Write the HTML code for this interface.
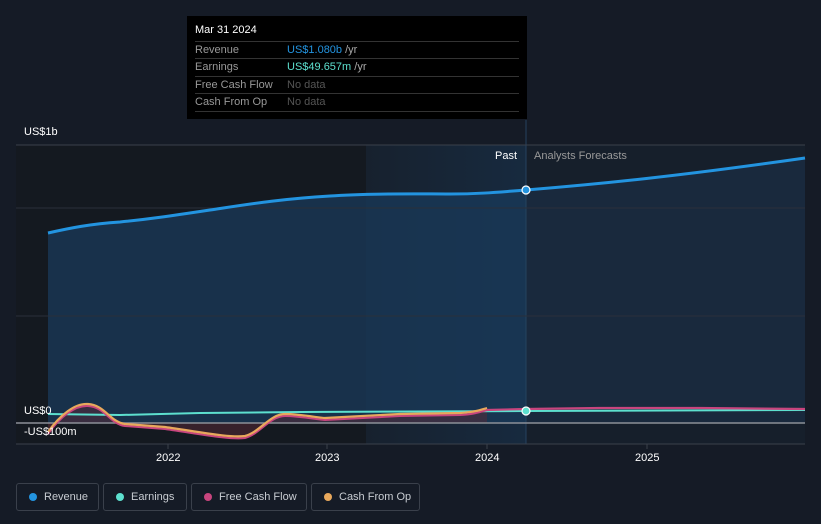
<!DOCTYPE html>
<html><head><style>
body{margin:0;width:821px;height:524px;background:#151b26;font-family:"Liberation Sans",sans-serif;overflow:hidden;position:relative}
.t{position:absolute;font-size:11px}
.leg{position:absolute;top:483px;height:28px;border:1px solid #3a404b;border-radius:3px;box-sizing:border-box;color:#c8ccd2;font-size:11px;line-height:26px;padding-left:27px}
.leg i{position:absolute;left:12px;top:9px;width:8px;height:8px;border-radius:50%}
.tip{position:absolute;left:187px;top:16px;width:340px;height:103px;background:#000}
.row{position:absolute;left:8px;width:324px;border-top:1px solid #333;height:17px;font-size:11px;line-height:17px;color:#999}
.row span{position:absolute;left:92px}
</style></head><body>
<svg width="821" height="524" style="position:absolute;left:0;top:0">
<defs>
<linearGradient id="pg" x1="0" x2="1"><stop offset="0" stop-color="#17212e"/><stop offset="1" stop-color="#172a3f"/></linearGradient>
</defs>
<rect x="16" y="145" width="350" height="299" fill="#141920"/>
<rect x="366" y="145" width="160" height="299" fill="url(#pg)"/>
<rect x="526" y="145" width="279" height="299" fill="#161f2b"/>
<path d="M48,233 C70,228 90,224 120,222 C150,219 170,216 210,210 C250,204 280,199 330,196 C370,193 420,194 450,194 C480,194 500,192 526,190 L526,423 L48,423Z" fill="#1a3a5a" opacity="0.75"/>
<path d="M526,190 C600,184 680,176 805,158 L805,423 L526,423Z" fill="#1a2c42" opacity="0.8"/>
<line x1="526" y1="120" x2="526" y2="444" stroke="#25425f" stroke-width="1"/>
<line x1="16" y1="145" x2="805" y2="145" stroke="#3a404b"/>
<line x1="16" y1="208" x2="805" y2="208" stroke="#2a303a"/>
<line x1="16" y1="316" x2="805" y2="316" stroke="#2a303a"/>
<line x1="16" y1="444" x2="805" y2="444" stroke="#3a404b"/>
<path d="M48,432 C60,415 75,403 88,404 C105,405 110,422 125,424 L165,427 C200,432 230,438 245,436 C260,432 270,414 285,414 C300,414 320,418 325,418 L400,414 L460,413 C475,412 480,410 487,408 L487,423 L48,423Z" fill="#5a2a35" opacity="0.5"/>
<line x1="16" y1="423" x2="805" y2="423" stroke="#8c9098" stroke-width="1.5"/>
<path d="M48,414 L120,415 L200,413 L300,412 L526,411 L805,410" stroke="#5de0cf" stroke-width="2" fill="none"/>
<path d="M487,410 L526,409 L600,408 L700,408 L805,409" stroke="#c8457e" stroke-width="2.2" fill="none"/>
<path d="M48,434 C60,417 75,405 88,406 C105,407 110,424 125,426 L165,429 C200,434 230,440 245,438 C260,434 270,416 285,416 C300,416 320,420 325,420 L400,416 L460,415 C475,414 480,412 487,410" stroke="#c8457e" stroke-width="2" fill="none"/>
<path d="M48,432 C60,415 75,403 88,404 C105,405 110,422 125,424 L165,427 C200,432 230,438 245,436 C260,432 270,414 285,414 C300,414 320,418 325,418 L400,414 L460,413 C475,412 480,410 487,408" stroke="#e8a85c" stroke-width="2.2" fill="none"/>
<path d="M48,233 C70,228 90,224 120,222 C150,219 170,216 210,210 C250,204 280,199 330,196 C370,193 420,194 450,194 C480,194 500,192 526,190 C600,184 680,176 805,158" stroke="#2394e0" stroke-width="3" fill="none"/>
<circle cx="526" cy="190" r="4" fill="#2394e0" stroke="#fff" stroke-width="1.2"/>
<circle cx="526" cy="411" r="4" fill="#5de0cf" stroke="#fff" stroke-width="1.2"/>
<g stroke="#3a404b"><line x1="168" y1="444" x2="168" y2="449"/><line x1="327" y1="444" x2="327" y2="449"/><line x1="487" y1="444" x2="487" y2="449"/><line x1="647" y1="444" x2="647" y2="449"/></g>
</svg>
<div class="t" style="left:24px;top:126px;color:#fff">US$1b</div>
<div class="t" style="left:24px;top:405px;color:#fff">US$0</div>
<div class="t" style="left:24px;top:426px;color:#fff">-US$100m</div>
<div class="t" style="left:495px;top:150px;color:#fff">Past</div>
<div class="t" style="left:534px;top:150px;color:#999">Analysts Forecasts</div>
<div class="t" style="left:156px;top:452px;color:#fff">2022</div>
<div class="t" style="left:315px;top:452px;color:#fff">2023</div>
<div class="t" style="left:475px;top:452px;color:#fff">2024</div>
<div class="t" style="left:635px;top:452px;color:#fff">2025</div>
<div class="tip">
<div style="position:absolute;left:8px;top:8px;color:#fff;font-size:11px">Mar 31 2024</div>
<div class="row" style="top:25px">Revenue<span style="color:#2394e0">US$1.080b <b style="font-weight:normal;color:#aaa">/yr</b></span></div>
<div class="row" style="top:42px">Earnings<span style="color:#5de0cf">US$49.657m <b style="font-weight:normal;color:#aaa">/yr</b></span></div>
<div class="row" style="top:60px">Free Cash Flow<span style="color:#555">No data</span></div>
<div class="row" style="top:77px">Cash From Op<span style="color:#555">No data</span></div>
<div class="row" style="top:95px;height:0"></div>
</div>
<div class="leg" style="left:16px;width:83px"><i style="background:#2394e0"></i>Revenue</div>
<div class="leg" style="left:103px;width:84px"><i style="background:#5de0cf"></i>Earnings</div>
<div class="leg" style="left:191px;width:116px"><i style="background:#c8457e"></i>Free Cash Flow</div>
<div class="leg" style="left:311px;width:109px"><i style="background:#e8a85c"></i>Cash From Op</div>
</body></html>
